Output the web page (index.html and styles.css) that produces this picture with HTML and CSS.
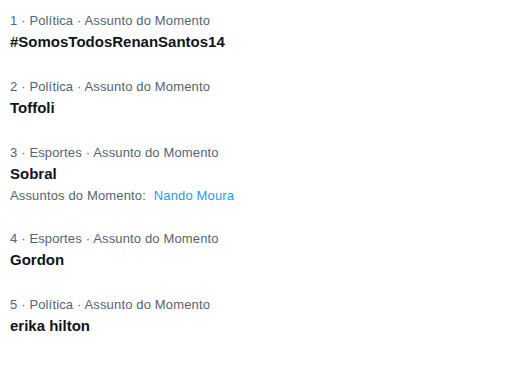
FILE: index.html
```html
<!DOCTYPE html>
<html lang="pt">
<head>
<meta charset="utf-8">
<link rel="stylesheet" href="styles.css">
</head>
<body>
<div class="trends">
  <div class="trend">
    <div class="meta">1 · Política · Assunto do Momento</div>
    <div class="title">#SomosTodosRenanSantos14</div>
  </div>
  <div class="trend">
    <div class="meta">2 · Política · Assunto do Momento</div>
    <div class="title">Toffoli</div>
  </div>
  <div class="trend">
    <div class="meta">3 · Esportes · Assunto do Momento</div>
    <div class="title">Sobral</div>
    <div class="sub">Assuntos do Momento: <span class="link">Nando Moura</span></div>
  </div>
  <div class="trend">
    <div class="meta">4 · Esportes · Assunto do Momento</div>
    <div class="title">Gordon</div>
  </div>
  <div class="trend">
    <div class="meta">5 · Política · Assunto do Momento</div>
    <div class="title">erika hilton</div>
  </div>
</div>
</body>
</html>
```
FILE: styles.css
```css
html, body {
  margin: 0;
  padding: 0;
  background: #ffffff;
}
body {
  font-family: "Liberation Sans", Arial, sans-serif;
  color: #0f1419;
}
.trends {
  display: flex;
  flex-direction: column;
}
.trend {
  padding: 13px 10px 13px;
}
.meta {
  font-size: 13px;
  line-height: 16px;
  letter-spacing: 0.15px;
  color: #536471;
}
.title {
  margin-top: 2px;
  font-size: 15px;
  line-height: 22px;
  font-weight: 700;
  color: #0f1419;
}
.sub {
  margin-top: 3px;
  margin-bottom: 1px;
  font-size: 13px;
  line-height: 16px;
  letter-spacing: 0.15px;
  color: #536471;
}
.link {
  margin-left: 4px;
  color: #1d9bf0;
}
```
